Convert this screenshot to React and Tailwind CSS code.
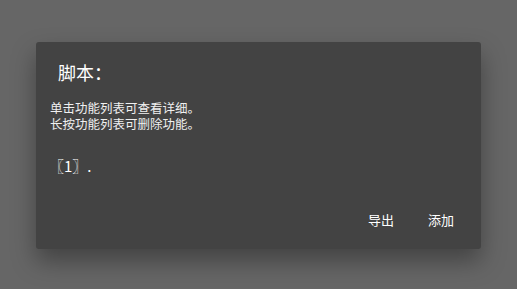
export default function App() {
  return (
    <div
      className="w-[517px] h-[289px] bg-[#666666] pt-[42px] pl-[36px] overflow-hidden"
      style={{ fontFamily: '"Noto Sans CJK SC", "Noto Sans", sans-serif' }}
    >
      {/* Dialog */}
      <div className="w-[445px] h-[207px] bg-[#434343] rounded-[3px] shadow-[0_12px_24px_rgba(0,0,0,0.35)] flex flex-col text-white">
        <h2 className="pl-[22px] pt-[18px] text-[18px] leading-[24px]">脚本：</h2>

        <div className="pl-[14px] pt-[16px] text-[12.5px] leading-[16px] text-[#f0f0f0]">
          <p>单击功能列表可查看详细。</p>
          <p>长按功能列表可删除功能。</p>
        </div>

        <div className="pl-[13px] pt-[24px] text-[15px] leading-[20px] text-white">〖1〗.</div>

        {/* Footer actions */}
        <div className="mt-auto flex justify-end gap-[34px] pr-[27px] pb-[20px] text-[13px] leading-[18px]">
          <button type="button">导出</button>
          <button type="button">添加</button>
        </div>
      </div>
    </div>
  );
}
